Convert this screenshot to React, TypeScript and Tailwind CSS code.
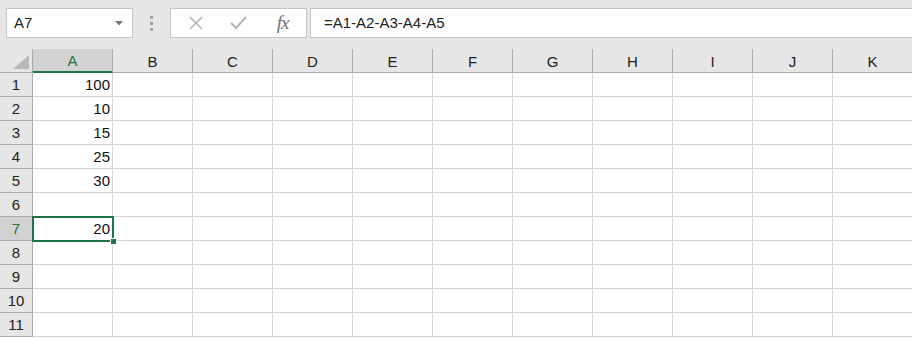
import React from 'react';

const cols = ['A', 'B', 'C', 'D', 'E', 'F', 'G', 'H', 'I', 'J', 'K'];
const values: Record<number, string> = { 1: '100', 2: '10', 3: '15', 4: '25', 5: '30', 7: '20' };
const rows = [1, 2, 3, 4, 5, 6, 7, 8, 9, 10, 11];

const font = { fontFamily: '"Liberation Sans", Arial, sans-serif' };

export default function App() {
  return (
    <div className="w-[912px] h-[338px] overflow-hidden bg-white text-[#222]" style={font}>
      {/* formula bar */}
      <div className="h-[49px] bg-[#e6e6e6] flex items-start pt-2 pl-[6px] gap-0">
        <div className="w-[127px] h-[30px] bg-white border border-[#c6c6c6] flex items-center justify-between pl-[7px] pr-[9px]">
          <span className="text-[15px] text-[#222]">A7</span>
          <svg width="8" height="5" viewBox="0 0 8 5">
            <path d="M0 0h8L4 4.5z" fill="#7a7a7a" />
          </svg>
        </div>
        <div className="w-[37px] h-[30px] flex flex-col items-center justify-center gap-[3px]">
          <span className="w-[3px] h-[3px] bg-[#a6a6a6]" />
          <span className="w-[3px] h-[3px] bg-[#a6a6a6]" />
          <span className="w-[3px] h-[3px] bg-[#a6a6a6]" />
        </div>
        <div className="w-[137px] h-[30px] bg-white border border-[#c6c6c6] flex items-center">
          <div className="w-[45px] flex justify-center pl-[4px]">
            <svg width="14" height="14" viewBox="0 0 14 14">
              <path d="M1 1l12 12M13 1L1 13" stroke="#b4b4b4" strokeWidth="1.6" />
            </svg>
          </div>
          <div className="w-[45px] flex justify-center">
            <svg width="17" height="14" viewBox="0 0 17 14">
              <path d="M1 7l5 5L16 1" stroke="#b4b4b4" strokeWidth="2" fill="none" />
            </svg>
          </div>
          <div className="flex-1 flex justify-center pr-[2px]">
            <span
              className="italic text-[19px] text-[#707070] tracking-[-1px]"
              style={{ fontFamily: '"Liberation Serif", "Times New Roman", serif' }}
            >
              fx
            </span>
          </div>
        </div>
        <div className="ml-[3px] flex-1 h-[30px] bg-white border border-[#c6c6c6] border-r-0 flex items-center pl-[13px]">
          <span className="text-[15px] text-[#222]">=A1-A2-A3-A4-A5</span>
        </div>
      </div>

      {/* header row */}
      <div className="flex h-[24px]">
        <div className="w-[33px] shrink-0 bg-[#e6e6e6] border-r border-b border-[#ababab] relative">
          <svg className="absolute right-[3px] bottom-[3px]" width="16" height="14" viewBox="0 0 16 14">
            <path d="M16 0V14H0z" fill="#b8b8b8" />
          </svg>
        </div>
        {cols.map((c) => (
          <div
            key={c}
            className={
              c === 'A'
                ? 'w-[80px] shrink-0 bg-[#d2d2d2] border-r border-[#ababab] border-b-2 border-b-[#217346] flex items-center justify-center pt-[3px] text-[15px] text-[#217346]'
                : 'w-[80px] shrink-0 bg-[#e6e6e6] border-r border-b border-[#ababab] flex items-center justify-center pt-[3px] text-[15px] text-[#222]'
            }
          >
            {c}
          </div>
        ))}
      </div>

      {/* rows */}
      {rows.map((r) => (
        <div key={r} className="flex h-[24px]">
          <div
            className={
              r === 7
                ? 'w-[33px] shrink-0 bg-[#d2d2d2] border-r border-b border-[#ababab] flex items-center justify-center pt-[2px] text-[15px] text-[#217346]'
                : 'w-[33px] shrink-0 bg-[#e6e6e6] border-r border-b border-[#ababab] flex items-center justify-center pt-[2px] text-[15px] text-[#222]'
            }
          >
            {r}
          </div>
          {cols.map((c) => (
            <div
              key={c}
              className={
                c === 'A' && r === 7
                  ? 'w-[80px] shrink-0 border-r border-b border-[#d4d4d4] relative z-10 flex items-center justify-end pr-[2px] pt-[2px] text-[15px] text-[#111]'
                  : 'w-[80px] shrink-0 border-r border-b border-[#d4d4d4] flex items-center justify-end pr-[2px] pt-[2px] text-[15px] text-[#111]'
              }
            >
              {c === 'A' ? values[r] : null}
              {c === 'A' && r === 7 && (
                <div className="absolute left-[-1px] top-[-1px] w-[82px] h-[26px] border-2 border-[#217346]">
                  <div className="absolute right-[-5px] bottom-[-5px] w-[7px] h-[7px] bg-[#217346] border border-white" />
                </div>
              )}
            </div>
          ))}
        </div>
      ))}
    </div>
  );
}
